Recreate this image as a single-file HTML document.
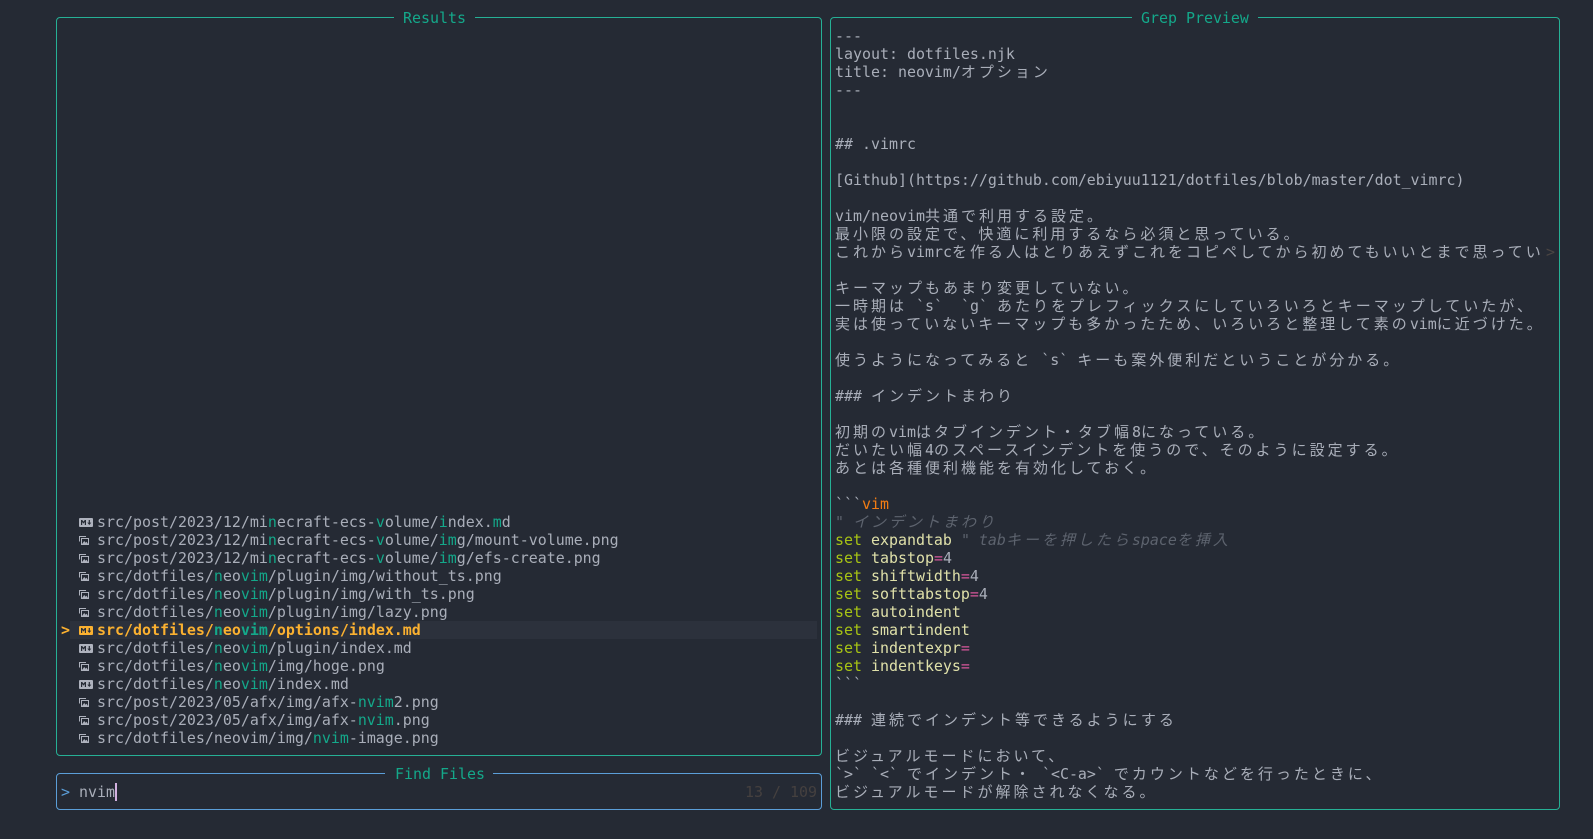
<!DOCTYPE html>
<html><head><meta charset="utf-8"><style>
html,body{margin:0;padding:0;background:#252a34;width:1593px;height:839px;overflow:hidden}
body{position:relative;font-family:"DejaVu Sans Mono","Liberation Mono",monospace;font-size:14.95px;color:#a9aeb9}
.l{position:absolute;height:18px;line-height:18px;white-space:pre}
b{font-weight:normal;font-family:"Noto Sans CJK JP","Liberation Sans",sans-serif;font-size:15px;letter-spacing:3px}
em{font-style:normal;color:#14a88a}
.box{position:absolute;box-sizing:border-box;border:1px solid #26b095;border-radius:4px}
.t{position:absolute;height:18px;line-height:18px;background:#252a34;color:#14a88a;white-space:pre}
.s{color:#a8c414}.o{color:#dfe0a9}.e{color:#d8569b}
.c{color:#5d636e;font-style:italic}
svg{position:absolute}
#r .l{left:97px}
#p .l{left:835px}
#p #tr{left:1546px;color:#4b4543}
.sel,.sel em{font-weight:bold}.sel{color:#fbb130}
</style></head><body>
<svg width="0" height="0" style="position:absolute"><defs>
<symbol id="md" viewBox="0 0 14 9"><path fill="currentColor" fill-rule="evenodd" d="M1 0h12a1 1 0 0 1 1 1v7a1 1 0 0 1-1 1H1a1 1 0 0 1-1-1V1a1 1 0 0 1 1-1zM2 2v5h1.2V4l1.3 1.6L5.8 4v3H7V2H5.8L4.5 3.6 3.2 2zM9.7 2v2.6H8.3l2 2.4 2-2.4h-1.4V2z"/></symbol>
<symbol id="im" viewBox="0 0 10 9"><path fill="none" stroke="currentColor" d="M.5 5.5V.5h6.5M2.5 2.5h7v6h-7z"/><path fill="currentColor" d="M3 8l2.2-3 1.5 1.7L7.6 5.6 9 8z"/></symbol>
</defs></svg>

<div class="box" style="left:56px;top:17px;width:766px;height:739px"></div>
<div class="box" style="left:830px;top:17px;width:730px;height:793px"></div>
<div class="box" style="left:56px;top:773px;width:766px;height:37px;border-color:#5b9ed8"></div>

<div class="t" style="left:394px;top:9px"> Results </div>
<div class="t" style="left:1132px;top:9px"> Grep Preview </div>
<div class="t" style="left:385px;top:765px"> <span style="position:relative;left:1px">Find Files</span> </div>

<div style="position:absolute;left:70px;top:621px;width:747px;height:18px;background:#2c313c"></div>
<div class="l" style="left:61px;top:621px;color:#fbb130;font-weight:bold">&gt;</div>

<svg style="left:79px;top:518px;color:#aeb2bd" width="14" height="9"><use href="#md"/></svg>
<svg style="left:79px;top:536px;color:#aeb2bd" width="10" height="9"><use href="#im"/></svg>
<svg style="left:79px;top:554px;color:#aeb2bd" width="10" height="9"><use href="#im"/></svg>
<svg style="left:79px;top:572px;color:#aeb2bd" width="10" height="9"><use href="#im"/></svg>
<svg style="left:79px;top:590px;color:#aeb2bd" width="10" height="9"><use href="#im"/></svg>
<svg style="left:79px;top:608px;color:#aeb2bd" width="10" height="9"><use href="#im"/></svg>
<svg style="left:79px;top:626px;color:#fbb130" width="14" height="9"><use href="#md"/></svg>
<svg style="left:79px;top:644px;color:#aeb2bd" width="14" height="9"><use href="#md"/></svg>
<svg style="left:79px;top:662px;color:#aeb2bd" width="10" height="9"><use href="#im"/></svg>
<svg style="left:79px;top:680px;color:#aeb2bd" width="14" height="9"><use href="#md"/></svg>
<svg style="left:79px;top:698px;color:#aeb2bd" width="10" height="9"><use href="#im"/></svg>
<svg style="left:79px;top:716px;color:#aeb2bd" width="10" height="9"><use href="#im"/></svg>
<svg style="left:79px;top:734px;color:#aeb2bd" width="10" height="9"><use href="#im"/></svg>

<div id="r">
<div class="l" style="top:513px">src/post/2023/12/mi<em>n</em>ecraft-ecs-<em>v</em>olume/<em>i</em>ndex.<em>m</em>d</div>
<div class="l" style="top:531px">src/post/2023/12/mi<em>n</em>ecraft-ecs-<em>v</em>olume/<em>im</em>g/mount-volume.png</div>
<div class="l" style="top:549px">src/post/2023/12/mi<em>n</em>ecraft-ecs-<em>v</em>olume/<em>im</em>g/efs-create.png</div>
<div class="l" style="top:567px">src/dotfiles/<em>n</em>eo<em>vim</em>/plugin/img/without_ts.png</div>
<div class="l" style="top:585px">src/dotfiles/<em>n</em>eo<em>vim</em>/plugin/img/with_ts.png</div>
<div class="l" style="top:603px">src/dotfiles/<em>n</em>eo<em>vim</em>/plugin/img/lazy.png</div>
<div class="l sel" style="top:621px">src/dotfiles/<em>n</em>eo<em>vim</em>/options/index.md</div>
<div class="l" style="top:639px">src/dotfiles/<em>n</em>eo<em>vim</em>/plugin/index.md</div>
<div class="l" style="top:657px">src/dotfiles/<em>n</em>eo<em>vim</em>/img/hoge.png</div>
<div class="l" style="top:675px">src/dotfiles/<em>n</em>eo<em>vim</em>/index.md</div>
<div class="l" style="top:693px">src/post/2023/05/afx/img/afx-<em>nvim</em>2.png</div>
<div class="l" style="top:711px">src/post/2023/05/afx/img/afx-<em>nvim</em>.png</div>
<div class="l" style="top:729px">src/dotfiles/neovim/img/<em>nvim</em>-image.png</div>
</div>

<div class="l" style="left:61px;top:783px;color:#5b9ed8">&gt;</div>
<div class="l" style="left:79px;top:783px">nvim</div>
<div style="position:absolute;left:115px;top:783px;width:2px;height:18px;background:#d3b1e0"></div>
<div class="l" style="left:745px;top:783px;color:#45403f">13 / 109</div>

<div id="p">
<div class="l" style="top:27px">---</div>
<div class="l" style="top:45px">layout: dotfiles.njk</div>
<div class="l" style="top:63px">title: neovim/<b>オプション</b></div>
<div class="l" style="top:81px">---</div>
<div class="l" style="top:135px">## .vimrc</div>
<div class="l" style="top:171px">[Github](https://github.com/ebiyuu1121/dotfiles/blob/master/dot_vimrc)</div>
<div class="l" style="top:207px">vim/neovim<b>共通で利用する設定。</b></div>
<div class="l" style="top:225px"><b>最小限の設定で、快適に利用するなら必須と思っている。</b></div>
<div class="l" style="top:243px"><b>これから</b>vimrc<b>を作る人はとりあえずこれをコピペしてから初めてもいいとまで思ってい</b></div>
<div class="l" style="top:243px" id="tr">&gt;</div>
<div class="l" style="top:279px"><b>キーマップもあまり変更していない。</b></div>
<div class="l" style="top:297px"><b>一時期は</b> &#96;s&#96;  &#96;g&#96; <b>あたりをプレフィックスにしていろいろとキーマップしていたが、</b></div>
<div class="l" style="top:315px"><b>実は使っていないキーマップも多かったため、いろいろと整理して素の</b>vim<b>に近づけた。</b></div>
<div class="l" style="top:351px"><b>使うようになってみると</b> &#96;s&#96; <b>キーも案外便利だということが分かる。</b></div>
<div class="l" style="top:387px">### <b>インデントまわり</b></div>
<div class="l" style="top:423px"><b>初期の</b>vim<b>はタブインデント・タブ幅</b>8<b>になっている。</b></div>
<div class="l" style="top:441px"><b>だいたい幅</b>4<b>のスペースインデントを使うので、そのように設定する。</b></div>
<div class="l" style="top:459px"><b>あとは各種便利機能を有効化しておく。</b></div>
<div class="l" style="top:495px">&#96;&#96;&#96;<span style="color:#f27c13">vim</span></div>
<div class="l c" style="top:513px">" <b>インデントまわり</b></div>
<div class="l" style="top:531px"><span class="s">set</span> <span class="o">expandtab</span> <span class="c">" tab<b>キーを押したら</b>space<b>を挿入</b></span></div>
<div class="l" style="top:549px"><span class="s">set</span> <span class="o">tabstop</span><span class="e">=</span>4</div>
<div class="l" style="top:567px"><span class="s">set</span> <span class="o">shiftwidth</span><span class="e">=</span>4</div>
<div class="l" style="top:585px"><span class="s">set</span> <span class="o">softtabstop</span><span class="e">=</span>4</div>
<div class="l" style="top:603px"><span class="s">set</span> <span class="o">autoindent</span></div>
<div class="l" style="top:621px"><span class="s">set</span> <span class="o">smartindent</span></div>
<div class="l" style="top:639px"><span class="s">set</span> <span class="o">indentexpr</span><span class="e">=</span></div>
<div class="l" style="top:657px"><span class="s">set</span> <span class="o">indentkeys</span><span class="e">=</span></div>
<div class="l" style="top:675px">&#96;&#96;&#96;</div>
<div class="l" style="top:711px">### <b>連続でインデント等できるようにする</b></div>
<div class="l" style="top:747px"><b>ビジュアルモードにおいて、</b></div>
<div class="l" style="top:765px">&#96;&gt;&#96; &#96;&lt;&#96; <b>でインデント・</b> &#96;&lt;C-a&gt;&#96; <b>でカウントなどを行ったときに、</b></div>
<div class="l" style="top:783px"><b>ビジュアルモードが解除されなくなる。</b></div>
</div>
</body></html>
